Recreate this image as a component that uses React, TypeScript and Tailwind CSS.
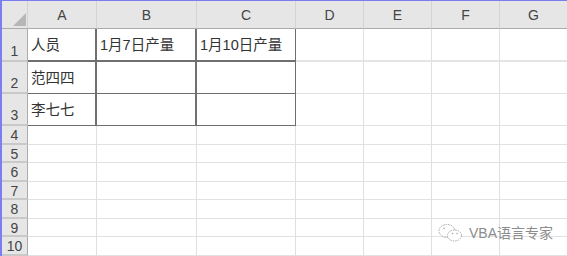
import React from "react";

const cols = ["A", "B", "C", "D", "E", "F", "G"];
const rows = [1, 2, 3, 4, 5, 6, 7, 8, 9, 10];

const data: Record<string, string> = {
  "1-0": "人员",
  "1-1": "1月7日产量",
  "1-2": "1月10日产量",
  "2-0": "范四四",
  "3-0": "李七七",
};

function cellClass(r: number, c: number): string {
  const inTable = r <= 3 && c <= 2;
  if (inTable) {
    const right = c === 2 ? "border-r border-r-[#6e6e6e]" : "border-r-2 border-r-[#707070]";
    const bottom = r === 1 ? "border-b-2 border-b-[#707070]" : "border-b border-b-[#6e6e6e]";
    return `${right} ${bottom}`;
  }
  const right = "border-r border-r-[#e0e0e0]";
  const bottom = r === 1 ? "border-b-2 border-b-[#e4e4e4]" : "border-b border-b-[#e1e1e1]";
  return `${right} ${bottom}`;
}

export default function App() {
  return (
    <div
      className="relative w-[567px] h-[256px] overflow-hidden bg-white border-t border-l-2 border-[#7d7df2]"
      style={{ fontFamily: '"Liberation Sans", "Noto Sans CJK SC", sans-serif' }}
    >
      <div className="grid grid-cols-[26px_69px_100px_99px_68px_68px_68px_68px] grid-rows-[28px_33px_32px_32px_19px_18px_19px_18px_19px_18px_19px] w-[600px]">
        {/* corner */}
        <div className="bg-[#e6e6e6] border-r border-r-[#d2d2d2] border-b border-b-[#ababab] flex items-end justify-end pr-[1px] pb-[2px]">
          <svg width="13" height="13" viewBox="0 0 13 13">
            <polygon points="13,0 13,13 0,13" fill="#b6b6b6" />
          </svg>
        </div>
        {cols.map((c) => (
          <div
            key={c}
            className="bg-[#e6e6e6] border-r border-r-[#d4d4d4] border-b border-b-[#ababab] flex items-end justify-center pb-[2px] text-[14px] text-[#444]"
          >
            {c}
          </div>
        ))}
        {rows.map((r) => (
          <React.Fragment key={r}>
            <div
              className={`bg-[#e6e6e6] border-r border-r-[#ababab] border-b-2 border-b-[#c9c9c9] flex justify-center text-[14px] text-[#444] leading-none ${
                r <= 3 ? "items-end pb-[2px]" : "items-center pt-[1px]"
              }`}
            >
              {r}
            </div>
            {cols.map((c, ci) => (
              <div
                key={c}
                className={`${cellClass(r, ci)} flex items-center pl-[3px] pt-[3px] text-[14.5px] text-[#333] whitespace-nowrap overflow-hidden`}
              >
                {data[`${r}-${ci}`] ?? ""}
              </div>
            ))}
          </React.Fragment>
        ))}
      </div>

      {/* watermark */}
      <div className="absolute left-[436px] top-[222px] flex items-center gap-[5px]">
        <svg width="26" height="20" viewBox="0 0 26 20" fill="none" stroke="#a8a8a8" strokeWidth="1" strokeDasharray="1.5 1">
          <ellipse cx="9" cy="8" rx="8" ry="6.5" />
          <ellipse cx="16.5" cy="12.5" rx="7" ry="5.5" fill="white" />
          <circle cx="6" cy="5.5" r="0.8" fill="#a8a8a8" stroke="none" />
          <circle cx="14.5" cy="10.5" r="0.8" fill="#a8a8a8" stroke="none" />
          <circle cx="19" cy="10.5" r="0.8" fill="#a8a8a8" stroke="none" />
        </svg>
        <span
          className="text-[14px] text-[#8c8c8c] leading-none"
          style={{ textShadow: "0 0 1px #fff, 0 0 1px #fff" }}
        >
          VBA语言专家
        </span>
      </div>
    </div>
  );
}
